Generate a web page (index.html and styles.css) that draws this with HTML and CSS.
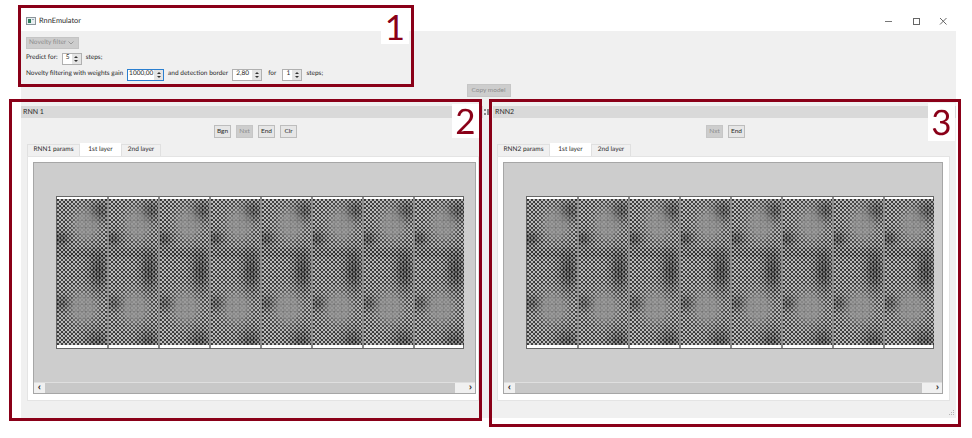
FILE: index.html
```html
<!DOCTYPE html>
<html lang="en">
<head>
<meta charset="utf-8">
<title>RnnEmulator</title>
<link rel="stylesheet" href="styles.css">
</head>
<body>
<div class="window">
  <header class="titlebar">
    <svg class="app-icon" width="10" height="8" viewBox="0 0 10 8"><rect x=".5" y=".5" width="9" height="7" fill="#e8eef0" stroke="#8a949a"/><rect x="2" y="2" width="3" height="4" fill="#2f7d5b"/><rect x="6" y="2" width="2" height="1" fill="#9ab"/></svg>
    <span class="title">RnnEmulator</span>
    <div class="controls">
      <svg width="8" height="8" viewBox="0 0 8 8"><path d="M1 4.500h7" stroke="#777" fill="none"/></svg>
      <svg width="8" height="8" viewBox="0 0 8 8"><rect x="1.500" y="1.500" width="6" height="6" stroke="#666" fill="none"/></svg>
      <svg width="8" height="8" viewBox="0 0 8 8"><path d="M1 1l6.500 6.500M7.500 1L1 7.500" stroke="#666" fill="none"/></svg>
    </div>
  </header>
  <main class="client">
    <section class="settings">
      <div class="combo"><span>Novelty filter</span><svg width="6" height="4" viewBox="0 0 6 4"><path d="M.5.500l2.500 2.500L5.500.5" stroke="#999" fill="none"/></svg></div>
      <div class="row">
        <span>Predict for:</span>
        <div class="spin spin-a"><span class="val">5</span><span class="arrows"><i class="up"></i><i class="down"></i></span></div>
        <span>steps;</span>
      </div>
      <div class="row">
        <span>Novelty filtering with weights gain</span>
        <div class="spin spin-b focus"><span class="val">1000,00</span><span class="arrows"><i class="up"></i><i class="down"></i></span></div>
        <span>and detection border</span>
        <div class="spin spin-c"><span class="val">2,80</span><span class="arrows"><i class="up"></i><i class="down"></i></span></div>
        <span class="for">for</span>
        <div class="spin spin-a"><span class="val">1</span><span class="arrows"><i class="up"></i><i class="down"></i></span></div>
        <span>steps;</span>
      </div>
    </section>
    <div class="copy-row"><button class="btn off copy">Copy model</button></div>
    <div class="panels">
      <section class="panel first">
        <h2 class="strip">RNN 1</h2>
        <div class="tools"><button class="btn">Bgn</button><button class="btn off">Nxt</button><button class="btn">End</button><button class="btn">Clr</button></div>
        <div class="tabs"><span class="tab wide">RNN1 params</span><span class="tab on">1st layer</span><span class="tab">2nd layer</span></div>
        <div class="pane">
          <div class="view">
            <div class="stage"><div class="map" data-cells="8"></div></div>
            <div class="scroll"><span class="sb-l">‹</span><span class="sb-track"></span><span class="sb-r">›</span></div>
          </div>
        </div>
      </section>
      <div class="splitter"><svg width="5" height="8" viewBox="0 0 5 8"><path d="M0 1h2v2H0zM3 1h2v2H3zM0 5h2v2H0zM3 1h2v6H3z" fill="#8a8a8a"/></svg></div>
      <section class="panel second">
        <h2 class="strip">RNN2</h2>
        <div class="tools"><button class="btn off">Nxt</button><button class="btn">End</button></div>
        <div class="tabs"><span class="tab wide">RNN2 params</span><span class="tab on">1st layer</span><span class="tab">2nd layer</span></div>
        <div class="pane">
          <div class="view">
            <div class="stage"><div class="map" data-cells="8"></div></div>
            <div class="scroll"><span class="sb-l">‹</span><span class="sb-track"></span><span class="sb-r">›</span></div>
          </div>
        </div>
      </section>
    </div>
    <svg class="grip" width="7" height="7" viewBox="0 0 7 7"><path d="M6 0v1H5V0zM6 2v1H5V2zM4 2v1H3V2zM6 4v1H5V4zM4 4v1H3V4zM2 4v1H1V4z" fill="#b5b5b5"/></svg>
  </main>
</div>
<div class="frame f1"><span class="num n1">1</span></div>
<div class="frame f2"><span class="num n2">2</span></div>
<div class="frame f3"><span class="num n3">3</span></div>
<script src="map.js"></script>
</body>
</html>
```
FILE: styles.css
```css
* { box-sizing: border-box; }
html, body { margin: 0; padding: 0; background: #fff; }
body { width: 972px; height: 438px; overflow: hidden; position: relative; font: 6.5px/1 "Lato", "Open Sans", sans-serif; color: #2a2a2a; text-rendering: geometricPrecision; }
.window { width: 935px; margin-left: 21px; }
.titlebar { height: 31px; display: flex; align-items: center; padding: 11px 0 0 5px; background: #fff; }
.app-icon { margin-right: 3px; }
.title { font-size: 7.4px; }
.controls { margin-left: auto; width: 63px; margin-right: 9px; display: flex; justify-content: space-between; }
.client { height: 387px; background: #f0f0f0; position: relative; padding-top: 6px; }
.settings { padding-left: 5px; display: flex; flex-direction: column; }
.combo { width: 53px; height: 12px; background: #cdcdcd; border: 1px solid #c4c4c4; color: #8e8e8e; display: flex; align-items: center; justify-content: space-between; padding: 0 4px 0 2px; white-space: nowrap; }
.row { display: flex; align-items: center; gap: 4px; height: 13px; margin-top: 3px; white-space: nowrap; }
.row .for { margin: 0 2px 0 1px; }
.spin { height: 12px; background: #fff; border: 1px solid #b0b0b0; display: flex; align-items: center; justify-content: space-between; }
.spin-a { width: 20px; }
.spin-b { width: 37px; }
.spin-c { width: 30px; margin-right: 1px; }
.focus { border-color: #2a7fd0; }
.val { padding-left: 3px; }
.spin-b .val { padding-left: 1px; }
.arrows { width: 9px; height: 10px; background: #e4e4e4; display: flex; flex-direction: column; align-items: center; justify-content: center; gap: 2px; }
.up { border: solid transparent; border-width: 0 2px 2px; border-bottom-color: #333; }
.down { border: solid transparent; border-width: 2px 2px 0; border-top-color: #333; }
.copy-row { display: flex; justify-content: center; margin-top: 3px; height: 13px; }
.btn { font: inherit; height: 13px; padding: 0; background: #e6e6e6; border: 1px solid #bdbdbd; color: #2a2a2a; width: 17px; }
.btn.off { background: #cdcdcd; border-color: #c6c6c6; color: #8e8e8e; }
.btn.copy { width: 44px; }
.panels { display: flex; margin-top: 9px; }
.panel.first { width: 462px; padding-right: 4px; }
.panel.second { width: 463px; padding-right: 6px; }
.splitter { width: 10px; padding: 2px 0 0 1px; }
.splitter svg { display: block; }
.strip { margin: 0; height: 12px; line-height: 12px; padding-left: 2px; font-size: 7px; font-weight: 400; background: #d9d9d9; }
.panel.first .strip { margin-right: -4px; }
.panel.second .strip { margin-right: -6px; }
.tools { height: 13px; margin-top: 7px; display: flex; gap: 5px; }
.panel.first .tools { padding-left: 193px; }
.panel.second .tools { padding-left: 213px; }
.tabs { display: flex; height: 13px; margin-top: 5px; padding-left: 6px; }
.panel.second .tabs { padding-left: 4px; }
.tab { width: 40px; height: 12px; margin-top: 1px; background: #f0f0f0; border: 1px solid #e0e0e0; border-bottom: 0; display: flex; align-items: center; justify-content: center; }
.tab.wide { width: 53px; }
.tab.on { background: #fff; height: 13px; margin-top: 0; border-color: #fff; width: 41px; }
.pane { margin-left: 6px; height: 245px; background: #fff; border: 1px solid #e4e4e4; padding: 5px 2px 6px 5px; }
.panel.second .pane { margin-left: 4px; width: 453px; padding-right: 6px; }
.view { height: 232px; background: #cdcdcd; border: 1px solid #a6a6a6; display: flex; flex-direction: column; }
.stage { flex: 1; padding: 33px 0 0 22px; }
.map { width: 408px; height: 153px; display: flex; background: #fff; border: 1px solid #666; }
.cell { width: 51px; flex: none; border-left: 2px solid #8c8c8c; padding: 2px 0 3px; }
.cell:first-child { width: 50px; border-left: 0; }
.cell canvas { display: block; }
.scroll { height: 11px; display: flex; border-top: 1px solid #dfdfdf; background: #c8c8c8; font: 700 10px/9px "Liberation Sans", sans-serif; color: #333; }
.sb-l { width: 11px; background: #f0f0f0; text-align: center; }
.sb-track { flex: 1; }
.sb-r { width: 20px; background: #f0f0f0; text-align: right; padding-right: 3px; }
.grip { position: absolute; right: 1px; bottom: 1px; }
.frame { position: absolute; border: 3px solid #8a0018; }
.f1 { left: 18px; top: 5px; width: 396px; height: 82px; }
.f2 { left: 9px; top: 99px; width: 473px; height: 322px; }
.f3 { left: 489px; top: 99px; width: 472px; height: 328px; }
.num { position: absolute; background: #fff; color: #8a0018; font: 35px/1 "Lato", "Liberation Sans", sans-serif; display: flex; align-items: center; justify-content: center; }
.n1 { left: 360px; top: 2px; width: 28px; height: 34px; }
.n2 { left: 440px; top: 2px; width: 27px; height: 34px; }
.n3 { left: 436px; top: 1px; width: 27px; height: 38px; }
```
FILE: map.js
```js
// Draws the dithered activation maps of a layer into small canvases.
function g(x, y, cx, cy, rx, ry) {
  var dx = (x - cx) / rx, dy = (y - cy) / ry;
  return Math.exp(-(dx * dx + dy * dy));
}
function paint(canvas) {
  var w = canvas.width, h = canvas.height, c = canvas.getContext("2d");
  var img = c.createImageData(w, h);
  for (var y = 0; y < h; y++) {
    for (var x = 0; x < w; x++) {
      var u = x / w, v = y / h;
      var checker = ((x >> 1) + (y >> 1)) % 2 ? 1 : -1;
      var flat = Math.min(1, 1.7 * (g(u, v, .58, .17, .24, .1) + g(u, v, .52, .74, .26, .1)));
      var dark = Math.min(1, g(u, v, .82, .49, .18, .13) + .8 * g(u, v, .85, .08, .2, .07)
        + .8 * g(u, v, .8, .97, .22, .08) + .8 * g(u, v, .06, .27, .18, .05) + .7 * g(u, v, .08, .71, .18, .05));
      var band = .6 * g(u, v, .4, .37, .7, .035);
      var grid = (y % 7 === 0 ? -12 : 0) + (x % 7 === 0 ? -10 : 0);
      var mid = 128 * (1 - dark * .35 - band * .2) + 18 * flat + grid;
      var amp = 62 * (1 - flat * .85) * (1 - dark * .5);
      var stripe = dark * (x % 3 === 0 ? -28 : 8);
      var value = Math.max(25, Math.min(225, mid + amp * checker + stripe * (1 - flat)));
      var i = (y * w + x) * 4;
      img.data[i] = img.data[i + 1] = img.data[i + 2] = value;
      img.data[i + 3] = 255;
    }
  }
  c.putImageData(img, 0, 0);
}
document.querySelectorAll(".map").forEach(function (map) {
  var n = +map.dataset.cells;
  for (var i = 0; i < n; i++) {
    var cell = document.createElement("div");
    cell.className = "cell";
    var canvas = document.createElement("canvas");
    cell.appendChild(canvas);
    map.appendChild(cell);
    canvas.width = i === 0 ? 50 : 49;
    canvas.height = 146;
    paint(canvas);
  }
});
```
